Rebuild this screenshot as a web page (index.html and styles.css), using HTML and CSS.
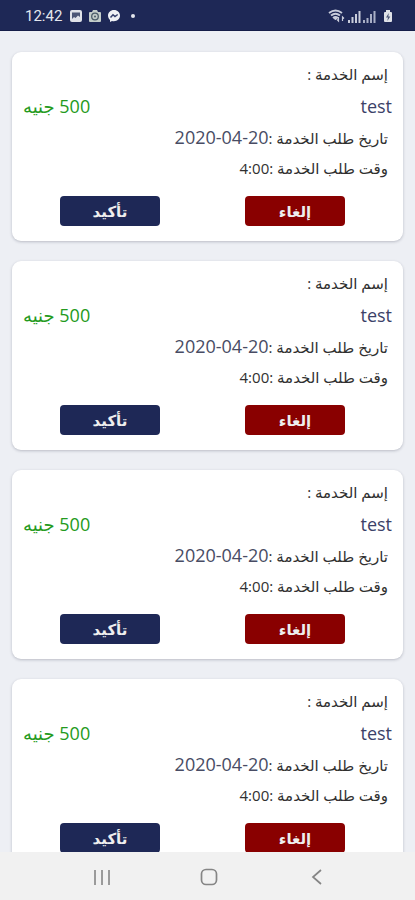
FILE: index.html
```
<!DOCTYPE html>
<html lang="ar" dir="rtl">
<head>
<meta charset="utf-8">
<meta name="viewport" content="width=device-width, initial-scale=1">
<title>طلبات الخدمة</title>
<link rel="stylesheet" href="styles.css">
</head>
<body>
<header class="status" dir="ltr">
  <div class="status-group">
    <span class="clock">12:42</span>
    <svg width="14" height="14" viewBox="0 0 14 14"><rect x="1" y="1" width="12" height="12" rx="2" fill="#dfe2e8"/><path d="M3 3.500H11V8L9 6.500 6.500 9 5 8 3 10Z" fill="#4b5675"/></svg>
    <svg width="14" height="14" viewBox="0 0 14 14"><path d="M2 3H4L5 1H9L10 3H12Q13 3 13 4V12Q13 13 12 13H2Q1 13 1 12V4Q1 3 2 3Z" fill="#c3cdc9"/><circle cx="7" cy="7.500" r="3.300" fill="none" stroke="#4b5c68" stroke-width="1.300"/><circle cx="7" cy="7.500" r="1" fill="#4b5c68"/></svg>
    <svg width="14" height="14" viewBox="0 0 14 14"><path d="M7 1C3.400 1 1 3.500 1 6.600C1 8.400 1.800 9.900 3 10.900V13L5 12C9.500 13 13 10.300 13 6.600C13 3.500 10.600 1 7 1Z" fill="#eef0f5"/><path d="M3.500 8.500 6 5.700 8 7.500 10.700 5.500" fill="none" stroke="#35406c" stroke-width="1.500"/></svg>
    <span class="dot"></span>
  </div>
  <div class="status-group signals">
    <svg width="18" height="14" viewBox="0 0 18 14" fill="none" stroke="#c9cddb"><path d="M1 4Q7.500-1 14 4M3 6.500Q7.500 3 12 6.500M5 9Q7.500 7 10 9" stroke-width="1.900"/><path d="M6 9H9L7.500 11Z" fill="#c9cddb"/><path d="M10.500 8V12L9 10.500M14.500 12V8L16 9.500" stroke-width="1.200"/></svg>
    <svg width="13" height="13" viewBox="0 0 13 13" fill="#c9cddb"><path d="M0 10H2V13H0ZM3.500 7H5.500V13H3.500ZM7 4H9V13H7ZM10.500 1H12.500V13H10.500Z"/></svg>
    <svg width="13" height="13" viewBox="0 0 13 13" fill="#a9afc6"><path d="M0 10H2V13H0ZM3.500 8H5.500V13H3.500ZM7 4H9V13H7ZM10.500 1H12.500V13H10.500Z"/></svg>
    <svg class="battery" width="10" height="14" viewBox="0 0 10 14"><path d="M3 1H7V3H8Q9 3 9 4V12Q9 13 8 13H2Q1 13 1 12V4Q1 3 2 3H3Z" fill="#dfe2e8"/><path d="M5.800 4 3 8.500H5L4.300 12 7.300 7.500H5.300Z" fill="#4b5675"/></svg>
  </div>
</header>
<main class="orders">
  <article class="card">
    <p class="label">إسم الخدمة :</p>
    <div class="service"><span class="name">test</span><span class="price">500 جنيه</span></div>
    <p class="label">تاريخ طلب الخدمة :<bdi class="date" dir="ltr">2020-04-20</bdi></p>
    <p class="label time">وقت طلب الخدمة :4:00</p>
    <div class="actions"><button class="cancel" type="button">إلغاء</button><button class="confirm" type="button">تأكيد</button></div>
  </article>
  <article class="card">
    <p class="label">إسم الخدمة :</p>
    <div class="service"><span class="name">test</span><span class="price">500 جنيه</span></div>
    <p class="label">تاريخ طلب الخدمة :<bdi class="date" dir="ltr">2020-04-20</bdi></p>
    <p class="label time">وقت طلب الخدمة :4:00</p>
    <div class="actions"><button class="cancel" type="button">إلغاء</button><button class="confirm" type="button">تأكيد</button></div>
  </article>
  <article class="card">
    <p class="label">إسم الخدمة :</p>
    <div class="service"><span class="name">test</span><span class="price">500 جنيه</span></div>
    <p class="label">تاريخ طلب الخدمة :<bdi class="date" dir="ltr">2020-04-20</bdi></p>
    <p class="label time">وقت طلب الخدمة :4:00</p>
    <div class="actions"><button class="cancel" type="button">إلغاء</button><button class="confirm" type="button">تأكيد</button></div>
  </article>
  <article class="card">
    <p class="label">إسم الخدمة :</p>
    <div class="service"><span class="name">test</span><span class="price">500 جنيه</span></div>
    <p class="label">تاريخ طلب الخدمة :<bdi class="date" dir="ltr">2020-04-20</bdi></p>
    <p class="label time">وقت طلب الخدمة :4:00</p>
    <div class="actions"><button class="cancel" type="button">إلغاء</button><button class="confirm" type="button">تأكيد</button></div>
  </article>
</main>
<nav class="navbar" dir="ltr">
  <button type="button" aria-label="التطبيقات الأخيرة"><svg width="18" height="18" viewBox="0 0 18 18" fill="none" stroke="#858585" stroke-width="1.600"><path d="M2 2V17M9 2V17M16 2V17"/></svg></button>
  <button type="button" aria-label="الرئيسية"><svg width="18" height="18" viewBox="0 0 18 18" fill="none" stroke="#858585" stroke-width="1.700"><rect x="1.500" y="1.500" width="15" height="15" rx="4.500"/></svg></button>
  <button type="button" aria-label="رجوع"><svg width="18" height="18" viewBox="0 0 18 18" fill="none" stroke="#858585" stroke-width="1.700"><path d="M13 2 5 9 13 16"/></svg></button>
</nav>
</body>
</html>
```
FILE: styles.css
```
* {
  box-sizing: border-box;
}

body {
  margin: 0;
  height: 100vh;
  display: flex;
  flex-direction: column;
  overflow: hidden;
  background: #edeff4;
  font-family: "Open Sans", "DejaVu Sans", sans-serif;
  color: #303030;
}

.status {
  flex: none;
  display: flex;
  justify-content: space-between;
  align-items: center;
  height: 31px;
  padding: 2px 22px 0 25px;
  background: #1e2856;
  border-bottom: 1px solid #151d48;
  color: #e4e6ed;
}

.status-group {
  display: flex;
  align-items: center;
  gap: 5px;
}

.clock {
  margin-right: 2px;
  font: 15px/20px Roboto, sans-serif;
}

.dot {
  width: 4px;
  height: 4px;
  margin-left: 5px;
  border-radius: 50%;
  background: #e4e6ed;
}

.signals {
  gap: 2px;
}

.battery {
  margin-left: 5px;
}

.orders {
  flex: 1;
  min-height: 0;
  overflow: hidden;
  display: flex;
  flex-direction: column;
  gap: 20px;
  padding: 21px 12px;
}

.card {
  flex: none;
  padding: 8px 0 15px;
  border-radius: 9px;
  background: #fff;
  box-shadow: 0 1px 3px rgba(30, 35, 60, 0.25);
}

.label {
  margin: 0;
  padding: 0 15px;
  font-size: 15px;
  line-height: 28px;
}

.time {
  line-height: 32px;
}

.date {
  font-size: 18px;
  line-height: 20px;
  color: #484c64;
}

.service {
  display: flex;
  justify-content: space-between;
  padding: 0 11px;
  font-size: 18px;
  line-height: 36px;
}

.name {
  color: #3c4168;
}

.price {
  color: #249a20;
}

.actions {
  display: flex;
  justify-content: space-between;
  padding: 12px 58px 0 48px;
}

.actions button {
  width: 100px;
  height: 30px;
  padding: 0;
  border: 0;
  border-radius: 4px;
  color: #eee;
  font: bold 15px/26px "Open Sans", "DejaVu Sans", sans-serif;
}

.cancel {
  background: #890000;
}

.confirm {
  background: #1e2856;
}

.navbar {
  flex: none;
  display: flex;
  justify-content: space-around;
  align-items: center;
  height: 48px;
  padding: 2px 44px 0 48px;
  background: #f1f1f1;
}

.navbar button {
  display: flex;
  padding: 0;
  border: 0;
  background: none;
}
```
